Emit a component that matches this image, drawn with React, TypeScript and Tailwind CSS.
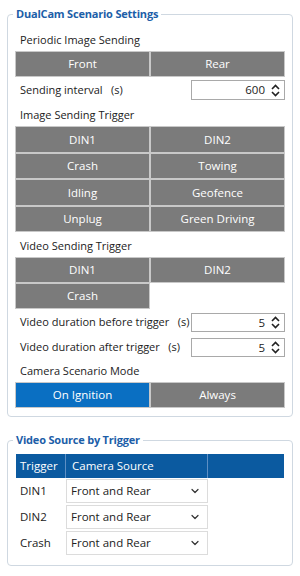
import { ChevronDown } from "lucide-react";

const font = { fontFamily: '"Open Sans", "Noto Sans", sans-serif' };

function Spinner() {
  return (
    <svg width="9" height="13" viewBox="0 0 9 13" className="shrink-0">
      <path d="M1 5 L4.5 1.5 L8 5" fill="none" stroke="#222" strokeWidth="1.6" />
      <path d="M1 8 L4.5 11.5 L8 8" fill="none" stroke="#222" strokeWidth="1.6" />
    </svg>
  );
}

function Btn({ label, active }: { label: string; active?: boolean }) {
  return (
    <div
      className={
        "flex items-center justify-center border border-[#c8c8c8] text-white text-[11.5px] " +
        (active ? "bg-[#0a6fc2]" : "bg-[#7b7b7b]")
      }
    >
      {label}
    </div>
  );
}

function Label({ text, className = "" }: { text: string; className?: string }) {
  return <div className={"h-[21px] flex items-center pl-[5px] text-[11px] text-[#222] " + className}>{text}</div>;
}

function NumberRow({ label, value, className = "" }: { label: string; value: string; className?: string }) {
  return (
    <div className={"flex items-center justify-between " + className}>
      <span className="pl-[5px] text-[11px] text-[#222] whitespace-pre">{label}</span>
      <div className="w-[94px] h-full border border-[#a9a9a9] bg-white flex items-center justify-end gap-[6px] pr-[4px] text-[11.5px] text-[#222]">
        <span>{value}</span>
        <Spinner />
      </div>
    </div>
  );
}

function SourceRow({ trigger }: { trigger: string }) {
  return (
    <div className="grid grid-cols-[50px_142px_1fr] h-[26px] items-center">
      <span className="pl-[4px] text-[11.5px] text-[#222]">{trigger}</span>
      <div className="h-[24px] border border-[#dcdcdc] bg-white flex items-center justify-between pl-[4px] pr-[6px] text-[11.5px] text-[#222]">
        <span>Front and Rear</span>
        <ChevronDown size={12} strokeWidth={2.4} color="#333" />
      </div>
      <span />
    </div>
  );
}

export default function App() {
  return (
    <div className="w-[300px] h-[576px] bg-white px-[7px] pt-[6px]" style={font}>
      <fieldset className="min-w-0 border border-[#cfd8e1] rounded-[4px] px-[7px] pb-[8px] pt-[8px]">
        <legend className="ml-[-2px] px-[3px] text-[11px] leading-[16px] font-bold tracking-[-0.2px] text-[#1c5ea8]">
          DualCam Scenario Settings
        </legend>
        <Label text="Periodic Image Sending" />
        <div className="grid grid-cols-2 h-[26px]">
          <Btn label="Front" />
          <Btn label="Rear" />
        </div>
        <NumberRow label="Sending interval   (s)" value="600" className="mt-[3px] h-[20px]" />
        <Label text="Image Sending Trigger" className="mt-[5px]" />
        <div className="grid grid-cols-2 auto-rows-[26.5px]">
          <Btn label="DIN1" />
          <Btn label="DIN2" />
          <Btn label="Crash" />
          <Btn label="Towing" />
          <Btn label="Idling" />
          <Btn label="Geofence" />
          <Btn label="Unplug" />
          <Btn label="Green Driving" />
        </div>
        <Label text="Video Sending Trigger" className="mt-[4px]" />
        <div className="grid grid-cols-2 auto-rows-[26px]">
          <Btn label="DIN1" />
          <Btn label="DIN2" />
          <Btn label="Crash" />
        </div>
        <NumberRow label="Video duration before trigger   (s)" value="5" className="mt-[4px] h-[19px]" />
        <NumberRow label="Video duration after trigger   (s)" value="5" className="mt-[6px] h-[19px]" />
        <Label text="Camera Scenario Mode" className="mt-[4px]" />
        <div className="grid grid-cols-2 h-[26px]">
          <Btn label="On Ignition" active />
          <Btn label="Always" />
        </div>
      </fieldset>

      <fieldset className="min-w-0 mt-[15px] border border-[#cfd8e1] rounded-[4px] px-[8px] pt-[6px] pb-[9px]">
        <legend className="ml-[-3px] px-[3px] text-[11px] leading-[16px] font-bold tracking-[-0.2px] text-[#1c5ea8]">
          Video Source by Trigger
        </legend>
        <div className="grid grid-cols-[50px_142px_1fr] h-[24px] bg-[#0b5aa0] text-white text-[11.5px]">
          <div className="flex items-center pl-[4px] border-r border-[#5e8fc4]">Trigger</div>
          <div className="flex items-center pl-[6px] border-r border-[#5e8fc4]">Camera Source</div>
          <div />
        </div>
        <SourceRow trigger="DIN1" />
        <SourceRow trigger="DIN2" />
        <SourceRow trigger="Crash" />
      </fieldset>
    </div>
  );
}
